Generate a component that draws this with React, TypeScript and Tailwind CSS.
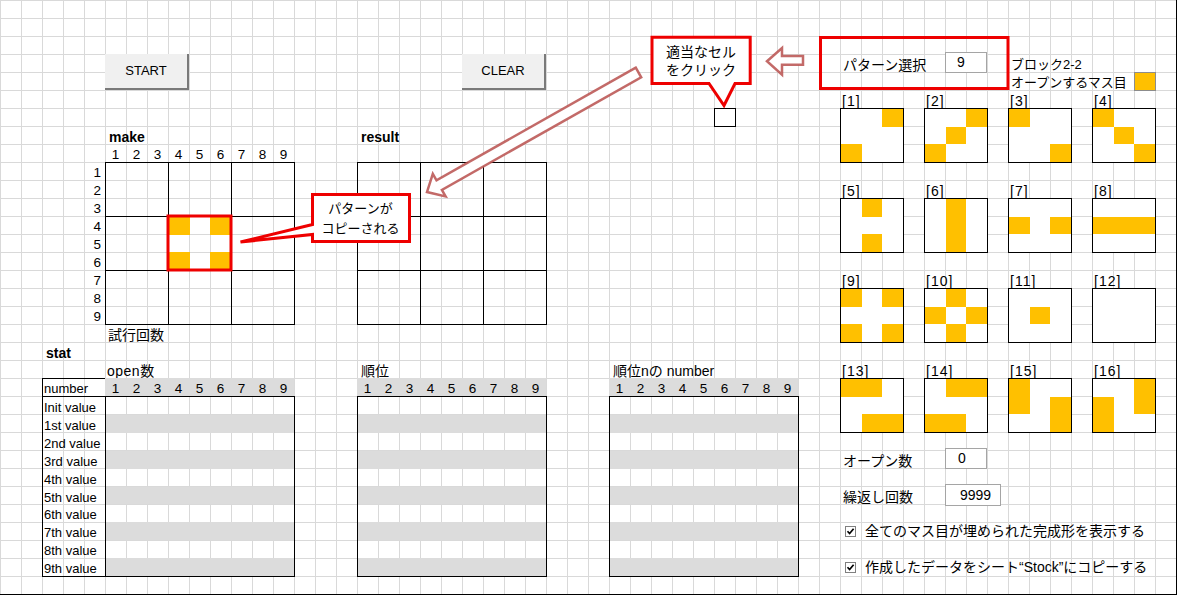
import React from "react"

const ORANGE = "bg-[#ffc000]"
const nums = [1, 2, 3, 4, 5, 6, 7, 8, 9]

const patterns: number[][] = [
  [2, 6], [2, 4, 6], [0, 8], [0, 4, 8],
  [1, 7], [1, 4, 7], [3, 5], [3, 4, 5],
  [0, 2, 6, 8], [1, 3, 5, 7], [4], [],
  [0, 1, 7, 8], [1, 2, 6, 7], [0, 3, 5, 8], [2, 3, 5, 6],
]

const rowLabels = [
  "Init value", "1st value", "2nd value", "3rd value", "4th value",
  "5th value", "6th value", "7th value", "8th value", "9th value",
]

function Block({ marks = [] }: { marks?: number[] }) {
  return (
    <div className="grid grid-cols-3 grid-rows-3 border-l border-t border-black">
      {nums.map((n, i) => (
        <div key={n} className={marks.includes(i) ? ORANGE : ""} />
      ))}
    </div>
  )
}

function Board({ className, center = [] }: { className: string; center?: number[] }) {
  return (
    <div className={`${className} -mr-px -mb-px grid grid-cols-3 grid-rows-3 border-r border-b border-black`}>
      {nums.map((n, b) => (
        <Block key={n} marks={b === 4 ? center : []} />
      ))}
    </div>
  )
}

function Digits({ className }: { className: string }) {
  return (
    <div className={`${className} grid grid-cols-9 text-center text-[13.5px]`}>
      {nums.map((n) => (
        <div key={n}>{n}</div>
      ))}
    </div>
  )
}

function DataBox({ className }: { className: string }) {
  return (
    <div className={`${className} -mr-px -mb-px flex flex-col border border-black`}>
      {rowLabels.map((r, i) => (
        <div key={r} className={`flex-1 ${i % 2 === 1 ? "bg-[#dcdcdc]" : ""}`} />
      ))}
    </div>
  )
}

function Tile({ n, marks }: { n: number; marks: number[] }) {
  return (
    <div className="flex flex-col">
      <div className="h-[18px] pl-[2px] text-[14px] tracking-[1px]">[{n}]</div>
      <div className="grid h-[55px] w-[64px] grid-cols-3 grid-rows-3 border border-black bg-white">
        {nums.map((k, i) => (
          <div key={k} className={marks.includes(i) ? ORANGE : ""} />
        ))}
      </div>
    </div>
  )
}

function Check() {
  return (
    <span className="flex h-[11px] w-[11px] items-center justify-center border border-[#808080] bg-white">
      <svg width="9" height="9" viewBox="0 0 9 9">
        <path d="M1.5 4.2 L3.6 6.5 L7.6 1.8" fill="none" stroke="#000" strokeWidth="1.7" />
      </svg>
    </span>
  )
}

function XlButton({ className, label }: { className: string; label: string }) {
  return (
    <div className={`${className} flex items-center justify-center border-r-2 border-b-2 border-[#7a7a7a] bg-[#f0f0f0] text-[13px] leading-[18px]`}>
      {label}
    </div>
  )
}

export default function App() {
  return (
    <div className="relative h-[595px] w-[1177px] overflow-hidden border-r border-b border-black bg-white text-[14px] leading-[22px] text-black [font-family:'Liberation_Sans','Noto_Sans_CJK_JP',sans-serif] [background-image:linear-gradient(to_right,#d9d9d9_1px,transparent_1px),linear-gradient(to_bottom,#d9d9d9_1px,transparent_1px)] [background-size:21px_18px]">
      <div className="grid grid-cols-[repeat(56,21px)] grid-rows-[repeat(33,18px)] whitespace-nowrap">
        <XlButton className="col-span-4 col-start-6 row-span-2 row-start-4" label="START" />
        <XlButton className="col-span-4 col-start-23 row-span-2 row-start-4" label="CLEAR" />

        {/* make */}
        <div className="col-span-4 col-start-6 row-start-8 pl-[4px] font-bold">make</div>
        <Digits className="col-span-9 col-start-6 row-start-9" />
        <div className="col-start-5 row-span-9 row-start-10 flex flex-col text-[13.5px]">
          {nums.map((n) => (
            <div key={n} className="h-[18px] pr-[4px] text-right">{n}</div>
          ))}
        </div>
        <Board className="col-span-9 col-start-6 row-span-9 row-start-10" center={[0, 2, 6, 8]} />
        <div className="col-span-4 col-start-6 row-start-19 pl-[3px]">試行回数</div>

        {/* result */}
        <div className="col-span-4 col-start-18 row-start-8 pl-[4px] font-bold">result</div>
        <Board className="col-span-9 col-start-18 row-span-9 row-start-10" />

        <div className="col-start-35 row-start-7 -mr-px -mb-px border border-black bg-white" />

        {/* stat */}
        <div className="col-span-3 col-start-3 row-start-20 pl-[4px] font-bold">stat</div>
        <div className="col-span-4 col-start-6 row-start-21 pl-[2px] tracking-[0.5px]">open数</div>
        <div className="col-span-3 col-start-3 row-span-11 row-start-22 -mr-px -mb-px flex flex-col border border-black text-[13px]">
          <div className="h-[18px] border-b border-black pl-[1px] leading-[20px]">number</div>
          {rowLabels.map((r) => (
            <div key={r} className="min-h-0 flex-1 pl-[1px] leading-[22px]">{r}</div>
          ))}
        </div>
        <Digits className="col-span-9 col-start-6 row-start-22 bg-[#dcdcdc]" />
        <DataBox className="col-span-9 col-start-6 row-span-10 row-start-23" />

        <div className="col-span-4 col-start-18 row-start-21 pl-[4px]">順位</div>
        <Digits className="col-span-9 col-start-18 row-start-22 bg-[#dcdcdc]" />
        <DataBox className="col-span-9 col-start-18 row-span-10 row-start-23" />

        <div className="col-span-6 col-start-30 row-start-21 pl-[4px]">順位nの number</div>
        <Digits className="col-span-9 col-start-30 row-start-22 bg-[#dcdcdc]" />
        <DataBox className="col-span-9 col-start-30 row-span-10 row-start-23" />

        {/* right panel */}
        <div className="col-span-5 col-start-41 row-start-4 pl-[3px]">パターン選択</div>
        <div className="col-span-3 col-start-46 row-start-4 -mt-[2px] h-[21px] w-[42px] self-start justify-self-start border border-[#a5a5a5] bg-white pl-[11px] leading-[19px]">9</div>
        <div className="col-span-6 col-start-49 row-start-4 pl-[3px] text-[13px]">ブロック2-2</div>
        <div className="col-span-6 col-start-49 row-start-5 pl-[3px] text-[13px]">オープンするマス目</div>
        <div className="col-start-55 row-start-5 -mr-px -mb-px border border-[#8c8c8c] bg-[#ffc000]" />

        <div className="col-span-16 col-start-41 row-span-19 row-start-6 grid grid-cols-[repeat(4,84px)] grid-rows-[repeat(4,90px)]">
          {patterns.map((p, i) => (
            <Tile key={i} n={i + 1} marks={p} />
          ))}
        </div>

        <div className="col-span-4 col-start-41 row-start-26 pl-[3px]">オープン数</div>
        <div className="col-span-3 col-start-46 row-start-26 -mt-[2px] h-[21px] w-[42px] self-start justify-self-start border border-[#a5a5a5] bg-white pl-[12px] leading-[19px]">0</div>
        <div className="col-span-4 col-start-41 row-start-28 pl-[3px]">繰返し回数</div>
        <div className="col-span-3 col-start-46 row-start-28 -mt-[2px] h-[22px] w-[56px] self-start justify-self-start border border-[#a5a5a5] bg-white pl-[14px] leading-[20px]">9999</div>

        <div className="col-span-16 col-start-41 row-start-30 flex items-center gap-[9px] pl-[5px] leading-[18px]">
          <Check />
          <span>全てのマス目が埋められた完成形を表示する</span>
        </div>
        <div className="col-span-16 col-start-41 row-start-32 flex items-center gap-[9px] pl-[5px] leading-[18px]">
          <Check />
          <span>作成したデータをシート“Stock”にコピーする</span>
        </div>
      </div>

      {/* drawn shapes over the sheet */}
      <svg className="pointer-events-none absolute left-0 top-0" width="1177" height="595">
        <rect x="168" y="216" width="63" height="54" fill="none" stroke="#ee0000" strokeWidth="3" />
        <rect x="820.5" y="37.5" width="187.5" height="51" fill="none" stroke="#ee0000" strokeWidth="3" />
        <path d="M652 37.2 H750.2 V83.5 H735 L724 105.5 L709 83.5 H652 Z" fill="#fff" stroke="#ee0000" strokeWidth="3" />
        <path d="M312.5 194.5 H409.5 V241.5 H312.5 V234.5 L240.5 242 L312.5 224.5 Z" fill="#fff" stroke="#ee0000" strokeWidth="3" />
        <polygon
          points="635.8,67.7 436.5,180.3 432.8,173.8 427,192 445.6,196.4 441.9,189.9 641.2,77.3"
          fill="#fff"
          stroke="#b9504d"
          strokeOpacity="0.85"
          strokeWidth="2.5"
        />
        <polygon
          points="767,61.3 782,48 782,56 803,56 803,64.7 782,64.7 782,74.7"
          fill="#fff"
          stroke="#b9504d"
          strokeOpacity="0.85"
          strokeWidth="2.5"
        />
      </svg>

      <div className="absolute left-[652px] top-[38px] flex h-[45px] w-[98px] flex-col items-center justify-center whitespace-nowrap leading-[18px]">
        <span>適当なセル</span>
        <span>をクリック</span>
      </div>
      <div className="absolute left-[312px] top-[196px] flex h-[45px] w-[97px] flex-col items-center justify-center whitespace-nowrap text-[13px] leading-[20px]">
        <span>パターンが</span>
        <span>コピーされる</span>
      </div>
    </div>
  )
}
